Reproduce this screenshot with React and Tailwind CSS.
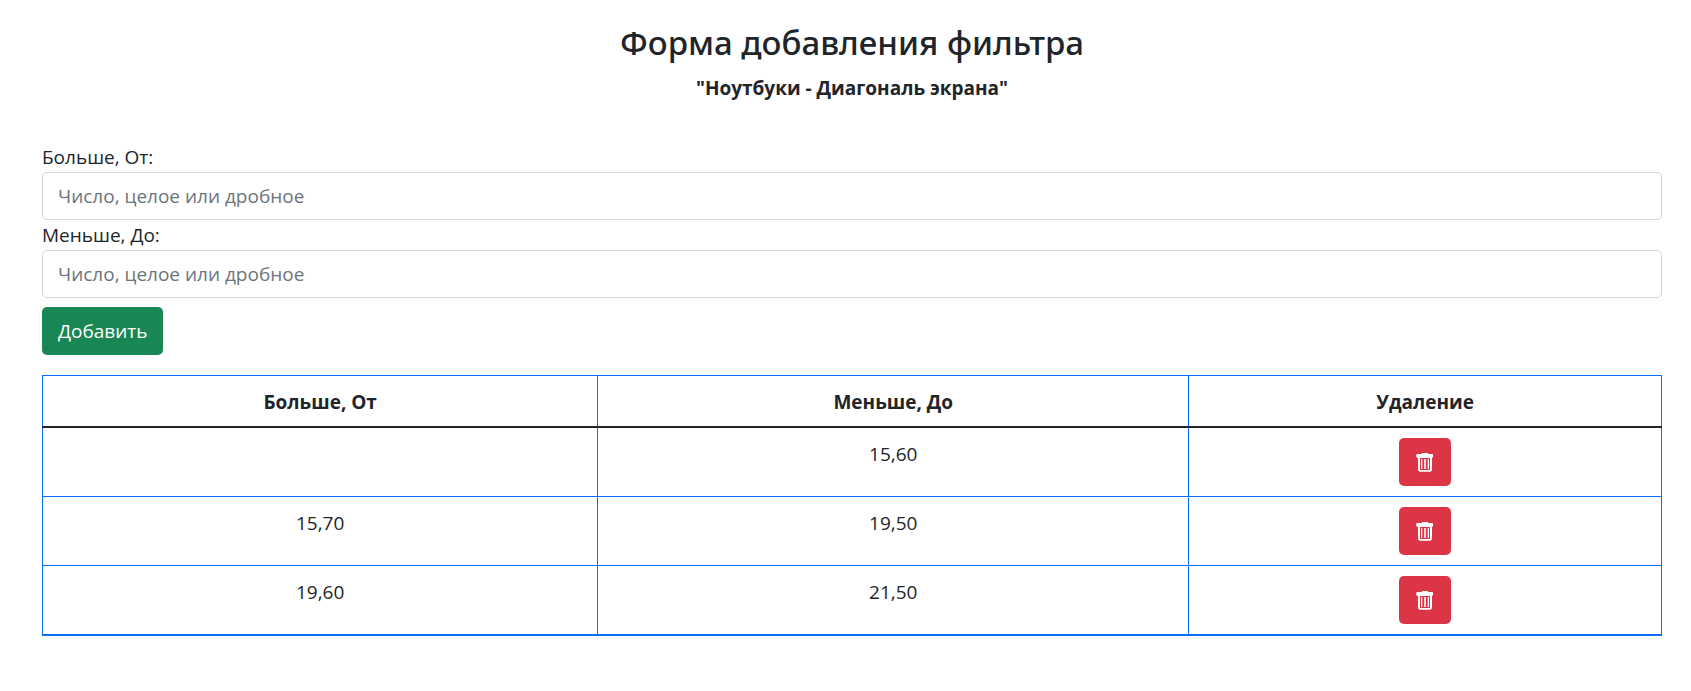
const filters = [
  { id: 1, from: '', to: '15,60' },
  { id: 2, from: '15,70', to: '19,50' },
  { id: 3, from: '19,60', to: '21,50' },
];

function TrashIcon() {
  return (
    <svg viewBox="0 0 20 20" className="size-5" fill="currentColor" aria-hidden="true">
      <path d="M7 1h6v1h4.200q.8 0 .8.8v2.200q0 .8-.8.8H17V17.500q0 2.200-2.200 2.200H5.200Q3 19.700 3 17.500V5.800h-.900q-.8 0-.8-.8v-2.200q0-.8.8-.8H7z M5 6V18h10V6z" fillRule="evenodd" />
      <path d="M6 7h1.300v10H6z M9.200 7h1.600v10H9.200z M12.700 7h1.300v10h-1.300z" />
    </svg>
  );
}

function Field({ id, label }) {
  return (
    <div>
      <label htmlFor={id} className="block">{label}</label>
      <input
        id={id}
        type="text"
        placeholder="Число, целое или дробное"
        className="block h-12 w-full rounded-[5px] border border-[#ced4da] bg-white px-[15px] placeholder:text-[#6c757d] placeholder:opacity-100"
      />
    </div>
  );
}

export default function App() {
  return (
    <main className="bg-white pt-[22px] pr-[29px] pb-14 pl-[42px] font-['Open_Sans','Noto_Sans',sans-serif] text-[19px] leading-[30px] text-[#212529]">
      <header className="text-center">
        <h1 className="font-['Noto_Sans',sans-serif] text-[33px] leading-[42px] font-medium">Форма добавления фильтра</h1>
        <p className="mt-[9px] font-bold">"Ноутбуки - Диагональ экрана"</p>
      </header>

      <form className="mt-[39px]" onSubmit={(e) => e.preventDefault()}>
        <Field id="from" label="Больше, От:" />
        <Field id="to" label="Меньше, До:" />
        <button type="submit" className="mt-[9px] h-12 rounded-[5px] bg-[#198754] px-4 text-white">
          Добавить
        </button>
      </form>

      <table className="mt-5 w-full table-fixed border-collapse border border-b-2 border-[#0d6efd] text-center">
        <colgroup>
          <col className="w-[34.3%]" />
          <col className="w-[36.5%]" />
          <col />
        </colgroup>
        <thead>
          <tr className="border-b-2 border-b-[#212529]">
            <th className="border-x border-x-[#0d6efd] px-[10px] pt-[11px] pb-[9px] font-bold">Больше, От</th>
            <th className="border-x border-x-[#0d6efd] px-[10px] pt-[11px] pb-[9px] font-bold">Меньше, До</th>
            <th className="border-x border-x-[#0d6efd] px-[10px] pt-[11px] pb-[9px] font-bold">Удаление</th>
          </tr>
        </thead>
        <tbody>
          {filters.map((f) => (
            <tr key={f.id} className="border-b border-b-[#0d6efd] last:border-b-2">
              <td className="border-x border-x-[#0d6efd] px-[10px] pt-[11px] pb-[9px] align-top">{f.from}</td>
              <td className="border-x border-x-[#0d6efd] px-[10px] pt-[11px] pb-[9px] align-top">{f.to}</td>
              <td className="border-x border-x-[#0d6efd] p-[10px] align-top">
                <button type="button" aria-label="Удалить" className="mx-auto flex h-12 w-[52px] items-center justify-center rounded-[5px] bg-[#dc3545] text-white">
                  <TrashIcon />
                </button>
              </td>
            </tr>
          ))}
        </tbody>
      </table>
    </main>
  );
}
